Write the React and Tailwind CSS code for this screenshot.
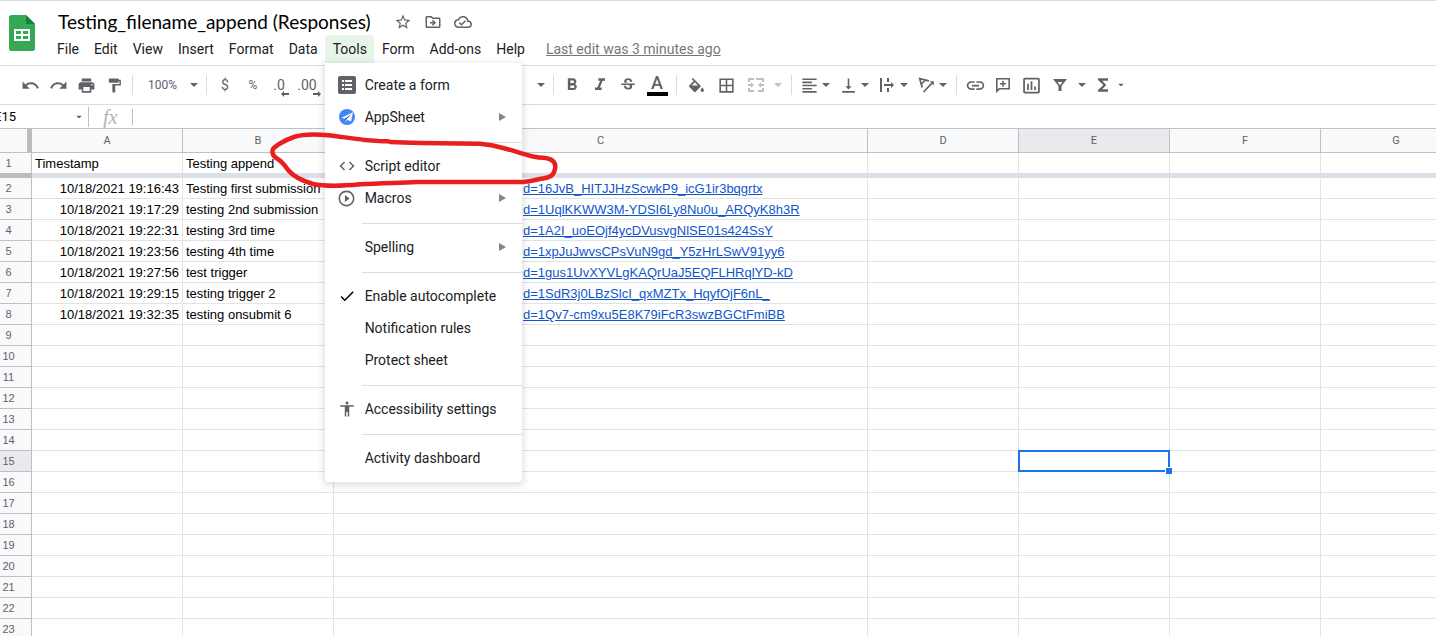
import React from "react";
import {
  MdUndo,
  MdRedo,
  MdPrint,
  MdFormatPaint,
  MdFormatBold,
  MdFormatItalic,
  MdStrikethroughS,
  MdBorderAll,
  MdFormatAlignLeft,
  MdVerticalAlignBottom,
  MdInsertLink,
  MdInsertChartOutlined,
  MdFunctions,
  MdStarOutline,
  MdOutlineDriveFileMove,
  MdOutlineCloudDone,
  MdCode,
  MdPlayCircleOutline,
  MdCheck,
  MdAccessibility,
} from "react-icons/md";

const ROWS = {
  1: ["Timestamp", "Testing append", ""],
  2: ["10/18/2021 19:16:43", "Testing first submission", "d=16JvB_HITJJHzScwkP9_icG1ir3bqgrtx"],
  3: ["10/18/2021 19:17:29", "testing 2nd submission", "d=1UqlKKWW3M-YDSI6Ly8Nu0u_ARQyK8h3R"],
  4: ["10/18/2021 19:22:31", "testing 3rd time", "d=1A2I_uoEOjf4ycDVusvgNlSE01s424SsY"],
  5: ["10/18/2021 19:23:56", "testing 4th time", "d=1xpJuJwvsCPsVuN9gd_Y5zHrLSwV91yy6"],
  6: ["10/18/2021 19:27:56", "test trigger", "d=1gus1UvXYVLgKAQrUaJ5EQFLHRqlYD-kD"],
  7: ["10/18/2021 19:29:15", "testing trigger 2", "d=1SdR3j0LBzSlcI_qxMZTx_HqyfOjF6nL_"],
  8: ["10/18/2021 19:32:35", "testing onsubmit 6", "d=1Qv7-cm9xu5E8K79iFcR3swzBGCtFmiBB"],
};

const COLUMNS = ["A", "B", "C", "D", "E", "F", "G"];
const ROW_NUMBERS = Array.from({ length: 22 }, (_, i) => i + 2);

function Caret({ className = "" }) {
  return (
    <svg viewBox="0 0 8 4" className={"h-1 w-2 shrink-0 " + className} fill="currentColor" aria-hidden="true">
      <path d="M0 0h8L4 4z" />
    </svg>
  );
}

function SheetsLogo() {
  return (
    <svg viewBox="0 0 26 36" className="h-9 w-[26px] shrink-0" aria-label="Sheets">
      <path d="M2.500 0H17l9 9v24.500a2.500 2.500 0 0 1-2.500 2.500h-21A2.500 2.500 0 0 1 0 33.500v-31A2.500 2.500 0 0 1 2.500 0z" fill="#34a853" />
      <path d="M17 0l9 9h-9z" fill="#188038" />
      <path d="M5 14h16v12H5zM7 16v3h5v-3zM14 16v3h5v-3zM7 21v3h5v-3zM14 21v3h5v-3z" fill="#fff" fillRule="evenodd" />
    </svg>
  );
}

function FillIcon() {
  return (
    <svg viewBox="3 0 18 17" className="h-[14px] w-[15px]" fill="currentColor" aria-hidden="true">
      <path d="M16.560 8.940L7.620 0 6.210 1.410l2.380 2.380-5.150 5.150c-.59.59-.59 1.540 0 2.120l5.500 5.500c.29.29.68.44 1.060.44s.77-.15 1.060-.44l5.500-5.500c.59-.58.59-1.530 0-2.120zM5.210 10L10 5.210 14.790 10H5.210z" />
      <path d="M19 11.500s-2 2.170-2 3.500c0 1.100.9 2 2 2s2-.9 2-2c0-1.330-2-3.500-2-3.500z" />
      <path d="M5 9h10v2l-5 5-5-5z" />
    </svg>
  );
}

function MergeIcon() {
  return (
    <svg viewBox="0 0 18 16" className="h-4 w-[18px]" fill="currentColor" aria-hidden="true">
      <path d="M1 1h6v2H3v2H1zM9 1h2v2H9zM11 1h6v4h-2V3h-4zM1 11h2v2h4v2H1zM15 11h2v4h-6v-2h4zM1 7h3V5l3 3-3 3V9H1zM17 7h-3V5l-3 3 3 3V9h3z" />
    </svg>
  );
}

function WrapIcon() {
  return (
    <svg viewBox="0 0 16 16" className="size-4" fill="currentColor" aria-hidden="true">
      <path d="M1 1h2v14H1zM8 1h2v4H8zM8 11h2v4H8zM5 7h7V5l3 3-3 3V9H5z" />
    </svg>
  );
}

function RotateIcon() {
  return (
    <svg viewBox="0 0 17 16" className="h-4 w-[17px]" fill="none" stroke="currentColor" strokeWidth="1.700" aria-hidden="true">
      <path d="M11 3.800L1.700 1.600L4.200 10.600" />
      <path d="M7.600 3L3.300 7.200" strokeWidth="1.400" />
      <path d="M5.500 15L14 6.200" />
      <path d="M11.700 4.300H15.800V8.400z" fill="currentColor" stroke="none" />
    </svg>
  );
}

function AddCommentIcon() {
  return (
    <svg viewBox="0 0 16 16" className="size-4" fill="none" stroke="currentColor" strokeWidth="1.600" aria-hidden="true">
      <path d="M1.800 1.800h12.400v10H4.300l-2.500 2.400zM8 3.800v6M5 6.800h6" />
    </svg>
  );
}

function FilterIcon() {
  return (
    <svg viewBox="0 0 16 16" className="size-4" fill="currentColor" aria-hidden="true">
      <path d="M1 2h14l-5.500 7v5h-3V9zM5.500 5L8 8.300 10.500 5z" fillRule="evenodd" />
    </svg>
  );
}

function DecimalIcon({ digits, right }) {
  return (
    <span className="flex flex-col items-end pt-1.5">
      <span className="pr-1 text-sm leading-3">{digits}</span>
      <svg viewBox="0 0 8 6" className="h-1.5 w-2" fill="currentColor" aria-hidden="true">
        {right ? <path d="M0 2h5V0l3 3-3 3V4H0z" /> : <path d="M8 2H3V0L0 3l3 3V4h5z" />}
      </svg>
    </span>
  );
}

function FormIcon() {
  return (
    <svg viewBox="0 0 18 18" className="size-[18px]" aria-hidden="true">
      <rect width="18" height="18" rx="2" fill="#5f6368" />
      <path d="M4 4h2v2H4zM7 4h7v2H7zM4 8h2v2H4zM7 8h7v2H7zM4 12h2v2H4zM7 12h7v2H7z" fill="#fff" />
    </svg>
  );
}

function AppSheetIcon() {
  return (
    <svg viewBox="0 0 16 16" className="size-4" aria-hidden="true">
      <circle cx="8" cy="8" r="8" fill="#4285f4" />
      <path d="M2.500 8.800L14 3.200l-2 9.300-3.600-1.800-2 2.300-.5-3.200z" fill="#fff" />
      <path d="M5.900 9.800L12.500 5l-5.200 5.400-.9 2.600z" fill="#1a56c4" />
    </svg>
  );
}

function ToolButton({ label, className = "w-7", children }) {
  return (
    <button type="button" aria-label={label} className={"flex h-7 shrink-0 items-center justify-center " + className}>
      {children}
    </button>
  );
}

function DropButton({ label, children }) {
  return (
    <button type="button" aria-label={label} className="flex h-7 w-[39px] shrink-0 items-center">
      <span className="flex w-[26px] justify-center">{children}</span>
      <Caret />
    </button>
  );
}

function Divider() {
  return <span className="mx-1 h-5 w-px shrink-0 bg-[#dadce0]" />;
}

function MenuItem({ icon, children, submenu }) {
  return (
    <li>
      <button type="button" role="menuitem" className="flex h-8 w-full items-center pr-4 text-left text-sm whitespace-nowrap text-[#202124]">
        <span className="flex w-10 shrink-0 justify-center pl-1 text-[#5f6368]">{icon}</span>
        <span className="grow">{children}</span>
        {submenu && (
          <svg viewBox="0 0 7 8" className="h-2 w-[7px]" fill="#80868b" aria-hidden="true">
            <path d="M0 0l7 4-7 4z" />
          </svg>
        )}
      </button>
    </li>
  );
}

function MenuDivider() {
  return <li role="separator" className="mt-[9px] mb-[7px] ml-[37px] h-px bg-[#dadce0]" />;
}

function ToolsMenu() {
  return (
    <ul role="menu" className="absolute top-full left-0 z-20 w-[197px] rounded-b rounded-tr bg-white pt-1.5 pb-2 shadow-[0_2px_6px_2px_rgba(60,64,67,0.15)]">
      <MenuItem icon={<FormIcon />}>Create a form</MenuItem>
      <MenuItem icon={<AppSheetIcon />} submenu>AppSheet</MenuItem>
      <MenuDivider />
      <MenuItem icon={<MdCode size={18} />}>Script editor</MenuItem>
      <MenuItem icon={<MdPlayCircleOutline size={19} />} submenu>Macros</MenuItem>
      <MenuDivider />
      <MenuItem submenu>Spelling</MenuItem>
      <MenuDivider />
      <MenuItem icon={<MdCheck size={18} className="text-black" />}>Enable autocomplete</MenuItem>
      <MenuItem>Notification rules</MenuItem>
      <MenuItem>Protect sheet</MenuItem>
      <MenuDivider />
      <MenuItem icon={<MdAccessibility size={18} />}>Accessibility settings</MenuItem>
      <MenuDivider />
      <MenuItem>Activity dashboard</MenuItem>
    </ul>
  );
}

function MenuBarItem({ children }) {
  return (
    <button type="button" className="h-7 pr-[7px] pl-2">
      {children}
    </button>
  );
}

function Header() {
  return (
    <header className="flex h-[66px] shrink-0 border-t border-b border-[#dadce0] pl-[9px]">
      <div className="pt-3.5">
        <SheetsLogo />
      </div>
      <div className="flex flex-col pt-[7px] pl-[14px]">
        <div className="flex h-[27px] items-center pl-[9px] text-[#5f6368]">
          <h1 className="font-['Lato',sans-serif] text-[19px] leading-6 whitespace-nowrap text-black">
            Testing_filename_append (Responses)
          </h1>
          <div className="ml-[23px] flex items-center gap-3">
            <button type="button" aria-label="Star"><MdStarOutline size={18} /></button>
            <button type="button" aria-label="Move"><MdOutlineDriveFileMove size={18} /></button>
            <button type="button" aria-label="Saved to Drive"><MdOutlineCloudDone size={18} /></button>
          </div>
        </div>
        <nav className="flex items-center text-sm whitespace-nowrap text-[#202124]">
          <MenuBarItem>File</MenuBarItem>
          <MenuBarItem>Edit</MenuBarItem>
          <MenuBarItem>View</MenuBarItem>
          <MenuBarItem>Insert</MenuBarItem>
          <MenuBarItem>Format</MenuBarItem>
          <MenuBarItem>Data</MenuBarItem>
          <div className="relative">
            <button type="button" aria-haspopup="menu" aria-expanded="true" className="block h-7 rounded-t bg-[#e6f4ea] pr-[7px] pl-2">
              Tools
            </button>
            <ToolsMenu />
          </div>
          <MenuBarItem>Form</MenuBarItem>
          <MenuBarItem>Add-ons</MenuBarItem>
          <MenuBarItem>Help</MenuBarItem>
          <a href="#history" className="ml-3.5 text-[#777] underline">Last edit was 3 minutes ago</a>
        </nav>
      </div>
    </header>
  );
}

function Toolbar() {
  return (
    <div role="toolbar" className="flex h-[39px] shrink-0 items-center border-b border-[#dadce0] pl-4 text-[#5f6368]">
      <ToolButton label="Undo"><MdUndo size={19} /></ToolButton>
      <ToolButton label="Redo"><MdRedo size={19} /></ToolButton>
      <ToolButton label="Print"><MdPrint size={19} /></ToolButton>
      <ToolButton label="Paint format"><MdFormatPaint size={17} /></ToolButton>
      <Divider />
      <button type="button" className="flex h-7 w-[65px] shrink-0 items-center justify-between pr-1 pl-[11px] text-xs">
        100%
        <Caret />
      </button>
      <Divider />
      <ToolButton label="Currency"><span className="text-sm">$</span></ToolButton>
      <ToolButton label="Percent"><span className="text-xs">%</span></ToolButton>
      <ToolButton label="Decrease decimals"><DecimalIcon digits=".0" /></ToolButton>
      <ToolButton label="Increase decimals"><DecimalIcon digits=".00" right /></ToolButton>
      <button type="button" aria-label="Font size" className="flex h-7 w-[226px] shrink-0 items-center justify-end pr-1">
        <Caret />
      </button>
      <Divider />
      <ToolButton label="Bold"><MdFormatBold size={20} /></ToolButton>
      <ToolButton label="Italic"><MdFormatItalic size={20} /></ToolButton>
      <ToolButton label="Strikethrough"><MdStrikethroughS size={18} /></ToolButton>
      <ToolButton label="Text color" className="w-[30px]">
        <span className="flex flex-col items-center">
          <span className="text-lg leading-[18px] font-medium">A</span>
          <span className="h-1 w-[21px] bg-black" />
        </span>
      </ToolButton>
      <Divider />
      <ToolButton label="Fill color" className="w-[30px]"><FillIcon /></ToolButton>
      <ToolButton label="Borders" className="w-[30px]"><MdBorderAll size={19} /></ToolButton>
      <button type="button" aria-label="Merge cells" disabled className="flex h-7 w-[46px] shrink-0 items-center justify-between pr-[5px] pl-1.5 text-[#bdc1c6]">
        <MergeIcon />
        <Caret />
      </button>
      <Divider />
      <DropButton label="Horizontal align"><MdFormatAlignLeft size={19} /></DropButton>
      <DropButton label="Vertical align"><MdVerticalAlignBottom size={19} /></DropButton>
      <DropButton label="Text wrapping"><WrapIcon /></DropButton>
      <DropButton label="Text rotation"><RotateIcon /></DropButton>
      <Divider />
      <ToolButton label="Insert link"><MdInsertLink size={21} /></ToolButton>
      <ToolButton label="Insert comment"><AddCommentIcon /></ToolButton>
      <ToolButton label="Insert chart"><MdInsertChartOutlined size={21} /></ToolButton>
      <button type="button" aria-label="Filter" className="flex h-7 w-11 shrink-0 items-center justify-between pr-[3px] pl-[7px]">
        <FilterIcon />
        <Caret />
      </button>
      <button type="button" aria-label="Functions" className="flex h-7 shrink-0 items-center gap-1 pl-1">
        <MdFunctions size={20} />
        <Caret className="scale-75" />
      </button>
    </div>
  );
}

function FormulaBar() {
  return (
    <div className="flex h-6 shrink-0 items-center overflow-hidden border-b border-[#c0c0c0] text-[#5f6368]">
      <input
        aria-label="Name box"
        defaultValue="E15"
        className="-ml-1.5 w-20 shrink-0 bg-transparent text-[13px] text-black outline-none"
      />
      <Caret className="ml-px scale-75" />
      <span className="ml-[5px] h-5 w-px bg-[#c0c0c0]" />
      <label htmlFor="formula" className="w-[43px] pl-3.5 font-['Liberation_Serif',serif] text-xl leading-5 text-[#b0b3b7] italic">
        fx
      </label>
      <span className="h-4 w-px bg-[#c0c0c0]" />
      <input id="formula" className="min-w-0 grow bg-transparent px-2 text-[13px] text-black outline-none" />
    </div>
  );
}

function RowHeader({ n, active, last }) {
  return (
    <th
      scope="row"
      className={
        "border-r border-[#c0c0c0] pr-3.5 text-center text-[11px] leading-4 font-normal text-[#5f6368] " +
        (active ? "bg-[#e8eaed] " : "bg-[#f8f9fa] ") +
        (last ? "" : "border-b")
      }
    >
      {n}
    </th>
  );
}

function Selection() {
  return (
    <span className="absolute -inset-px z-10 border-2 border-[#1a73e8]">
      <span className="absolute -right-1 -bottom-1 size-[7px] border-t border-l border-white bg-[#1a73e8]" />
    </span>
  );
}

function Grid() {
  return (
    <div className="relative min-h-0 grow overflow-hidden">
      <table className="w-px table-fixed border-separate border-spacing-0 font-['Liberation_Sans',Arial,sans-serif] text-[13px] leading-4 whitespace-nowrap text-black">
        <colgroup>
          <col className="w-8" />
          <col className="w-[151px]" />
          <col className="w-[151px]" />
          <col className="w-[534px]" />
          <col className="w-[151px]" />
          <col className="w-[151px]" />
          <col className="w-[151px]" />
          <col className="w-[151px]" />
        </colgroup>
        <thead className="font-['Roboto',sans-serif] text-[11px] text-[#5f6368]">
          <tr className="h-6">
            <td className="border-r-[5px] border-b border-r-[#bdbdbd] border-b-[#c0c0c0] bg-[#f8f9fa]" />
            {COLUMNS.map((c) => (
              <th
                key={c}
                scope="col"
                className={"border-r border-b border-[#c0c0c0] font-normal " + (c === "E" ? "bg-[#e8eaed]" : "bg-[#f8f9fa]")}
              >
                {c}
              </th>
            ))}
          </tr>
        </thead>
        <tbody>
          <tr className="h-5">
            <RowHeader n={1} last />
            {COLUMNS.map((c, i) => (
              <td key={c} className="border-r border-[#e2e3e3] px-[3px] pt-0.5">
                {ROWS[1][i]}
              </td>
            ))}
          </tr>
          <tr className="h-[5px]">
            <td className="bg-[#bdbdbd]" />
            <td colSpan={7} className="bg-[#dadfe8]" />
          </tr>
          {ROW_NUMBERS.map((n) => (
            <tr key={n} className="h-[21px]">
              <RowHeader n={n} active={n === 15} />
              {COLUMNS.map((c, i) => {
                const value = ROWS[n] && ROWS[n][i];
                if (c === "A") {
                  return <td key={c} className="border-r border-b border-[#e2e3e3] px-[3px] pt-0.5 text-right">{value}</td>;
                }
                if (c === "C") {
                  return (
                    <td key={c} className="border-r border-b border-[#e2e3e3] pt-0.5 pr-[3px] pl-[189px]">
                      {value && <a href="#file" className="text-[#1155cc] underline">{value}</a>}
                    </td>
                  );
                }
                return (
                  <td key={c} className="relative border-r border-b border-[#e2e3e3] px-[3px] pt-0.5">
                    {value}
                    {c === "E" && n === 15 && <Selection />}
                  </td>
                );
              })}
            </tr>
          ))}
        </tbody>
      </table>
    </div>
  );
}

function MarkerStroke() {
  return (
    <svg
      viewBox="265 125 300 70"
      className="pointer-events-none absolute top-[125px] left-[265px] z-30 h-[70px] w-[300px]"
      fill="none"
      stroke="#e91e1e"
      strokeWidth="4.500"
      strokeLinecap="round"
      strokeLinejoin="round"
      aria-hidden="true"
    >
      <path d="M388 141.300C370 141.500 345 137 328 135.200C314 134 303 134 294 137C284 140.500 275 146 273 149C271.500 153 273 156 277 158.500C283 162 285 166 289 171C294 177 303 181 313 184C325 186.500 345 185.800 360 184.300C380 183 395 183 417 182H523C532 181.500 538 179 544 178.300C552 177 554 174 555 169C556.500 162 552 158.500 543 157.800C530 157.500 520 152 505 148.500C497 146 490 144.500 480 143.700C460 143 430 143.300 411 142.800L390 142" />
    </svg>
  );
}

export default function App() {
  return (
    <div className="relative flex h-screen flex-col overflow-hidden bg-white font-['Roboto',sans-serif]">
      <Header />
      <Toolbar />
      <FormulaBar />
      <Grid />
      <MarkerStroke />
    </div>
  );
}
